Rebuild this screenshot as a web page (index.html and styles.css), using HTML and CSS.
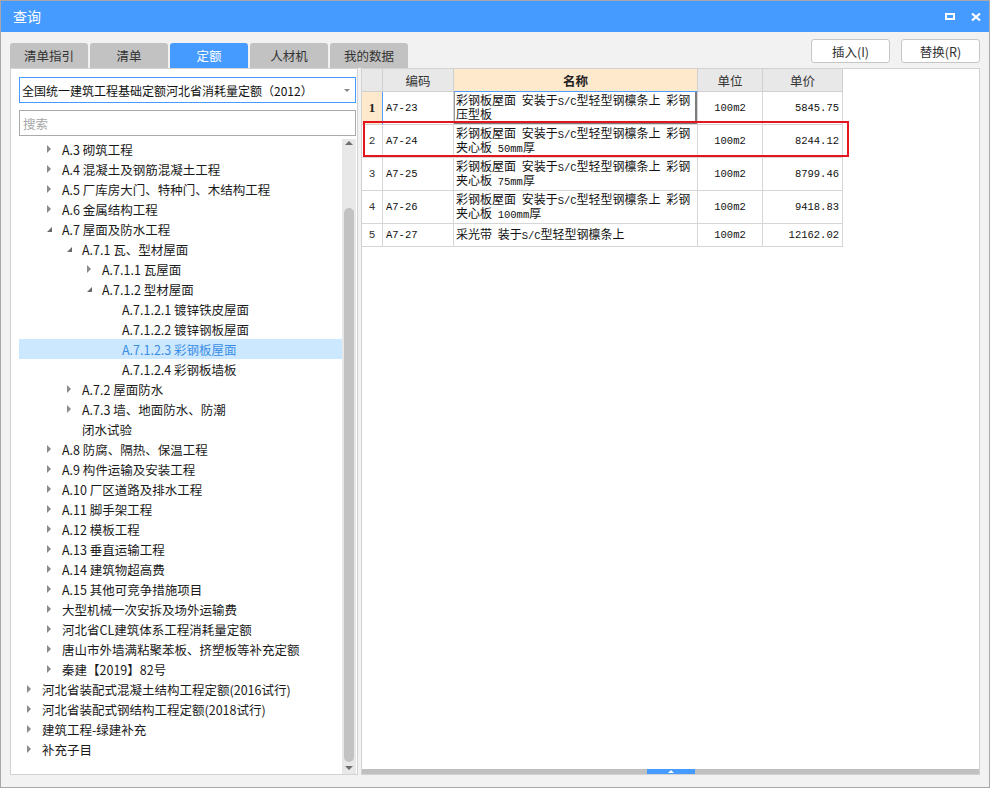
FILE: index.html
```html
<!DOCTYPE html>
<html lang="zh-CN">
<head>
<meta charset="utf-8">
<title>查询</title>
<link rel="stylesheet" href="styles.css">
</head>
<body>
<div class="window">
  <div class="titlebar">
    <div class="title">查询</div>
    <div class="win-btns">
      <span class="maxbtn"></span>
      <svg class="closebtn" width="10" height="8" viewBox="0 0 10 8"><path d="M1 0.5 L9 7.5 M9 0.5 L1 7.5" stroke="#fff" stroke-width="2.2" fill="none"/></svg>
    </div>
  </div>

  <div class="topbar">
    <div class="tabs">
      <div class="tab">清单指引</div>
      <div class="tab">清单</div>
      <div class="tab active">定额</div>
      <div class="tab">人材机</div>
      <div class="tab">我的数据</div>
    </div>
    <div class="actions">
      <button class="btn">插入(I)</button>
      <button class="btn">替换(R)</button>
    </div>
  </div>

  <div class="main">
    <div class="left">
      <div class="select">全国统一建筑工程基础定额河北省消耗量定额（2012）<span class="caret"></span></div>
      <div class="search">搜索</div>
      <div class="tree-wrap">
        <div class="tree">
          <div class="row l1"><span class="ab"><i class="tri-r"></i></span>A.3 砌筑工程</div>
          <div class="row l1"><span class="ab"><i class="tri-r"></i></span>A.4 混凝土及钢筋混凝土工程</div>
          <div class="row l1"><span class="ab"><i class="tri-r"></i></span>A.5 厂库房大门、特种门、木结构工程</div>
          <div class="row l1"><span class="ab"><i class="tri-r"></i></span>A.6 金属结构工程</div>
          <div class="row l1"><span class="ab"><i class="tri-d"></i></span>A.7 屋面及防水工程</div>
          <div class="row l2"><span class="ab"><i class="tri-d"></i></span>A.7.1 瓦、型材屋面</div>
          <div class="row l3"><span class="ab"><i class="tri-r"></i></span>A.7.1.1 瓦屋面</div>
          <div class="row l3"><span class="ab"><i class="tri-d"></i></span>A.7.1.2 型材屋面</div>
          <div class="row l4"><span class="ab"></span>A.7.1.2.1 镀锌铁皮屋面</div>
          <div class="row l4"><span class="ab"></span>A.7.1.2.2 镀锌钢板屋面</div>
          <div class="row l4 selected"><span class="ab"></span>A.7.1.2.3 彩钢板屋面</div>
          <div class="row l4"><span class="ab"></span>A.7.1.2.4 彩钢板墙板</div>
          <div class="row l2"><span class="ab"><i class="tri-r"></i></span>A.7.2 屋面防水</div>
          <div class="row l2"><span class="ab"><i class="tri-r"></i></span>A.7.3 墙、地面防水、防潮</div>
          <div class="row l2"><span class="ab"></span>闭水试验</div>
          <div class="row l1"><span class="ab"><i class="tri-r"></i></span>A.8 防腐、隔热、保温工程</div>
          <div class="row l1"><span class="ab"><i class="tri-r"></i></span>A.9 构件运输及安装工程</div>
          <div class="row l1"><span class="ab"><i class="tri-r"></i></span>A.10 厂区道路及排水工程</div>
          <div class="row l1"><span class="ab"><i class="tri-r"></i></span>A.11 脚手架工程</div>
          <div class="row l1"><span class="ab"><i class="tri-r"></i></span>A.12 模板工程</div>
          <div class="row l1"><span class="ab"><i class="tri-r"></i></span>A.13 垂直运输工程</div>
          <div class="row l1"><span class="ab"><i class="tri-r"></i></span>A.14 建筑物超高费</div>
          <div class="row l1"><span class="ab"><i class="tri-r"></i></span>A.15 其他可竞争措施项目</div>
          <div class="row l1"><span class="ab"><i class="tri-r"></i></span>大型机械一次安拆及场外运输费</div>
          <div class="row l1"><span class="ab"><i class="tri-r"></i></span>河北省CL建筑体系工程消耗量定额</div>
          <div class="row l1"><span class="ab"><i class="tri-r"></i></span>唐山市外墙满粘聚苯板、挤塑板等补充定额</div>
          <div class="row l1"><span class="ab"><i class="tri-r"></i></span>秦建【2019】82号</div>
          <div class="row l0"><span class="ab"><i class="tri-r"></i></span>河北省装配式混凝土结构工程定额(2016试行)</div>
          <div class="row l0"><span class="ab"><i class="tri-r"></i></span>河北省装配式钢结构工程定额(2018试行)</div>
          <div class="row l0"><span class="ab"><i class="tri-r"></i></span>建筑工程-绿建补充</div>
          <div class="row l0"><span class="ab"><i class="tri-r"></i></span>补充子目</div>
        </div>
        <div class="scrollbar">
          <div class="sb-btn"><i class="sb-up"></i></div>
          <div class="sb-track"><div class="sb-thumb"></div></div>
          <div class="sb-btn down"><i class="sb-down"></i></div>
        </div>
      </div>
    </div>

    <div class="right">
      <div class="grid-area">
        <div class="grid">
          <div class="hc"></div>
          <div class="hc">编码</div>
          <div class="hc focus">名称</div>
          <div class="hc">单位</div>
          <div class="hc">单价</div>

          <div class="c num cur">1</div>
          <div class="c code">A7-23</div>
          <div class="c name curcell"><div class="t">彩钢板屋面 安装于<span class="en">S/C</span>型轻型钢檩条上 彩钢<br>压型板</div></div>
          <div class="c unit">100m2</div>
          <div class="c price">5845.75</div>

          <div class="c num">2</div>
          <div class="c code">A7-24</div>
          <div class="c name"><div class="t">彩钢板屋面 安装于<span class="en">S/C</span>型轻型钢檩条上 彩钢<br>夹心板 <span class="en">50mm</span>厚</div></div>
          <div class="c unit">100m2</div>
          <div class="c price">8244.12</div>

          <div class="c num">3</div>
          <div class="c code">A7-25</div>
          <div class="c name"><div class="t">彩钢板屋面 安装于<span class="en">S/C</span>型轻型钢檩条上 彩钢<br>夹心板 <span class="en">75mm</span>厚</div></div>
          <div class="c unit">100m2</div>
          <div class="c price">8799.46</div>

          <div class="c num">4</div>
          <div class="c code">A7-26</div>
          <div class="c name"><div class="t">彩钢板屋面 安装于<span class="en">S/C</span>型轻型钢檩条上 彩钢<br>夹心板 <span class="en">100mm</span>厚</div></div>
          <div class="c unit">100m2</div>
          <div class="c price">9418.83</div>

          <div class="c num short">5</div>
          <div class="c code short">A7-27</div>
          <div class="c name short"><div class="t">采光带 装于<span class="en">S/C</span>型轻型钢檩条上</div></div>
          <div class="c unit short">100m2</div>
          <div class="c price short">12162.02</div>
        </div>
      </div>
      <div class="splitter"><div class="handle"><i class="handle-tri"></i></div></div>
      <div class="mark"></div>
    </div>
  </div>
</div>
</body>
</html>
```

FILE: styles.css
```css
body {
  margin: 0;
  background: #f2f2f2;
}

.window {
  width: 990px;
  height: 788px;
  box-sizing: border-box;
  border: 1px solid #a8a8a8;
  background: #f2f2f2;
  display: flex;
  flex-direction: column;
  font-family: "Noto Sans CJK SC", sans-serif;
  font-size: 12px;
  color: #1a1a1a;
}

/* title bar */
.titlebar {
  height: 31px;
  flex: none;
  background: #459bff;
  display: flex;
  align-items: center;
  padding: 0 8px 0 12px;
  color: #fff;
  font-size: 14px;
}
.title {
  flex: 1;
  line-height: 31px;
}
.win-btns {
  display: flex;
  align-items: center;
  gap: 16px;
  height: 31px;
}
.maxbtn {
  display: block;
  width: 10px;
  height: 7px;
  box-sizing: border-box;
  border: 2px solid #fff;
}
.closebtn {
  display: block;
}

/* tabs + buttons */
.topbar {
  height: 36px;
  flex: none;
  display: flex;
  padding: 0 9px;
}
.tabs {
  display: flex;
  gap: 2px;
  align-self: flex-end;
}
.tab {
  width: 78px;
  height: 25px;
  background: #c2c2c2;
  border-radius: 3px 3px 0 0;
  display: flex;
  align-items: center;
  justify-content: center;
  color: #333;
  font-size: 12.5px;
}
.tab.active {
  background: #459bff;
  color: #fff;
}
.actions {
  margin-left: auto;
  display: flex;
  gap: 11px;
  padding-top: 7px;
}
.btn {
  width: 79px;
  height: 24px;
  box-sizing: border-box;
  background: #fff;
  border: 1px solid #c6c6c6;
  border-radius: 3px;
  font-family: "Noto Sans CJK SC", sans-serif;
  font-size: 12.5px;
  color: #333;
  padding: 0;
  display: flex;
  align-items: center;
  justify-content: center;
}

/* main area */
.main {
  flex: 1;
  min-height: 0;
  display: flex;
  gap: 3px;
  padding: 0 9px 12px;
}

.left {
  width: 348px;
  flex: none;
  box-sizing: border-box;
  border: 1px solid #d2d2d2;
  background: #fff;
  display: flex;
  flex-direction: column;
  padding: 8px 1px 0 8px;
}
.select {
  height: 26px;
  flex: none;
  box-sizing: border-box;
  border: 1px solid #459bff;
  display: flex;
  align-items: center;
  padding-left: 2px;
  position: relative;
  color: #111;
  font-size: 12px;
}
.caret {
  position: absolute;
  right: 5px;
  top: 11px;
  width: 0;
  height: 0;
  border-left: 3px solid transparent;
  border-right: 3px solid transparent;
  border-top: 3px solid #888;
}
.search {
  margin-top: 7px;
  height: 26px;
  flex: none;
  box-sizing: border-box;
  border: 1px solid #aaaaaa;
  display: flex;
  align-items: center;
  padding-left: 3px;
  color: #a6a6a6;
  font-size: 12.5px;
}

.tree-wrap {
  flex: 1;
  min-height: 0;
  display: flex;
  margin-top: 3px;
}
.tree {
  flex: 1;
  overflow: hidden;
}
.row {
  height: 20px;
  display: flex;
  align-items: center;
  white-space: nowrap;
  color: #1a1a1a;
  font-size: 12.5px;
}
.row.l0 { padding-left: 8px; }
.row.l1 { padding-left: 28px; }
.row.l2 { padding-left: 48px; }
.row.l3 { padding-left: 68px; }
.row.l4 { padding-left: 88px; }
.row.selected {
  background: #cce8ff;
  color: #3a8de6;
}
.ab {
  width: 15px;
  flex: none;
  display: flex;
  align-items: center;
  height: 20px;
}
.tri-r {
  display: block;
  width: 0;
  height: 0;
  border-left: 4px solid #8a8a8a;
  border-top: 4px solid transparent;
  border-bottom: 4px solid transparent;
}
.tri-d {
  display: block;
  width: 0;
  height: 0;
  border-bottom: 5px solid #6a6a6a;
  border-left: 5px solid transparent;
  margin-top: 1px;
}

.scrollbar {
  width: 14px;
  flex: none;
  background: #e8e8e8;
  display: flex;
  flex-direction: column;
  align-items: center;
}
.sb-btn {
  height: 14px;
  flex: none;
  display: flex;
  align-items: center;
  justify-content: center;
}
.sb-btn.down {
  height: 11px;
  align-items: flex-start;
  padding-top: 3px;
  box-sizing: border-box;
}
.sb-up {
  display: block;
  width: 0;
  height: 0;
  border-left: 4px solid transparent;
  border-right: 4px solid transparent;
  border-bottom: 4px solid #6e6e6e;
  margin-top: -6px;
}
.sb-down {
  display: block;
  width: 0;
  height: 0;
  border-left: 4px solid transparent;
  border-right: 4px solid transparent;
  border-top: 4px solid #6e6e6e;
}
.sb-track {
  flex: 1;
  display: flex;
  flex-direction: column;
  padding: 55px 0 1px;
}
.sb-thumb {
  flex: 1;
  width: 10px;
  border-radius: 5px;
  background: #c2c2c2;
}

/* right panel */
.right {
  flex: 1;
  box-sizing: border-box;
  border: 1px solid #d2d2d2;
  background: #fff;
  display: flex;
  flex-direction: column;
  position: relative;
}
.grid-area {
  flex: 1;
  min-height: 0;
}
.grid {
  display: grid;
  grid-template-columns: 21px 71px 244px 65px 80px;
  width: 481px;
}
.hc {
  height: 23px;
  box-sizing: border-box;
  border-right: 1px solid #d0d0d0;
  border-bottom: 1px solid #d0d0d0;
  background: #e8e8e8;
  display: flex;
  align-items: center;
  justify-content: center;
  color: #333;
  font-size: 12.5px;
}
.hc.focus {
  background: #ffe9cc;
  font-weight: bold;
  color: #222;
  border-bottom-color: #4f9dff;
}
.c {
  height: 33px;
  box-sizing: border-box;
  border-right: 1px solid #d6d6d6;
  border-bottom: 1px solid #d6d6d6;
  display: flex;
  align-items: center;
  font-family: "Liberation Mono", "Noto Sans CJK SC", monospace;
  font-size: 12px;
  line-height: 14px;
  color: #111;
  white-space: nowrap;
}
.c.short {
  height: 23px;
}
.t {
  white-space: nowrap;
  word-spacing: -1.5px;
}
.num {
  justify-content: center;
  font-size: 11px;
  color: #333;
}
.num.cur {
  background: #ffe9cc;
  font-family: "Liberation Serif", serif;
  font-weight: bold;
  font-size: 13px;
  color: #222;
  border-right-color: #4f9dff;
}
.code {
  padding-left: 3px;
  font-size: 10.5px;
}
.name {
  padding-left: 2px;
  padding-top: 1px;
}
.curcell {
  box-shadow: inset -2px -2px 0 #7c7c7c, inset 1px 0 0 #9a9a9a;
}
.en {
  font-size: 10.5px;
  word-spacing: 0;
}
.unit {
  justify-content: center;
  font-size: 10.5px;
}
.price {
  justify-content: flex-end;
  padding-right: 3px;
  font-size: 10.5px;
}

.splitter {
  height: 5px;
  flex: none;
  background: #c0c0c0;
  display: flex;
  justify-content: center;
}
.handle {
  width: 48px;
  background: #459bff;
  display: flex;
  align-items: center;
  justify-content: center;
}
.handle-tri {
  display: block;
  width: 0;
  height: 0;
  border-left: 3px solid transparent;
  border-right: 3px solid transparent;
  border-bottom: 3px solid #fff;
}

.mark {
  position: absolute;
  left: 1px;
  top: 52px;
  width: 486px;
  height: 36px;
  box-sizing: border-box;
  border: 2px solid #e5151d;
  pointer-events: none;
}
```
